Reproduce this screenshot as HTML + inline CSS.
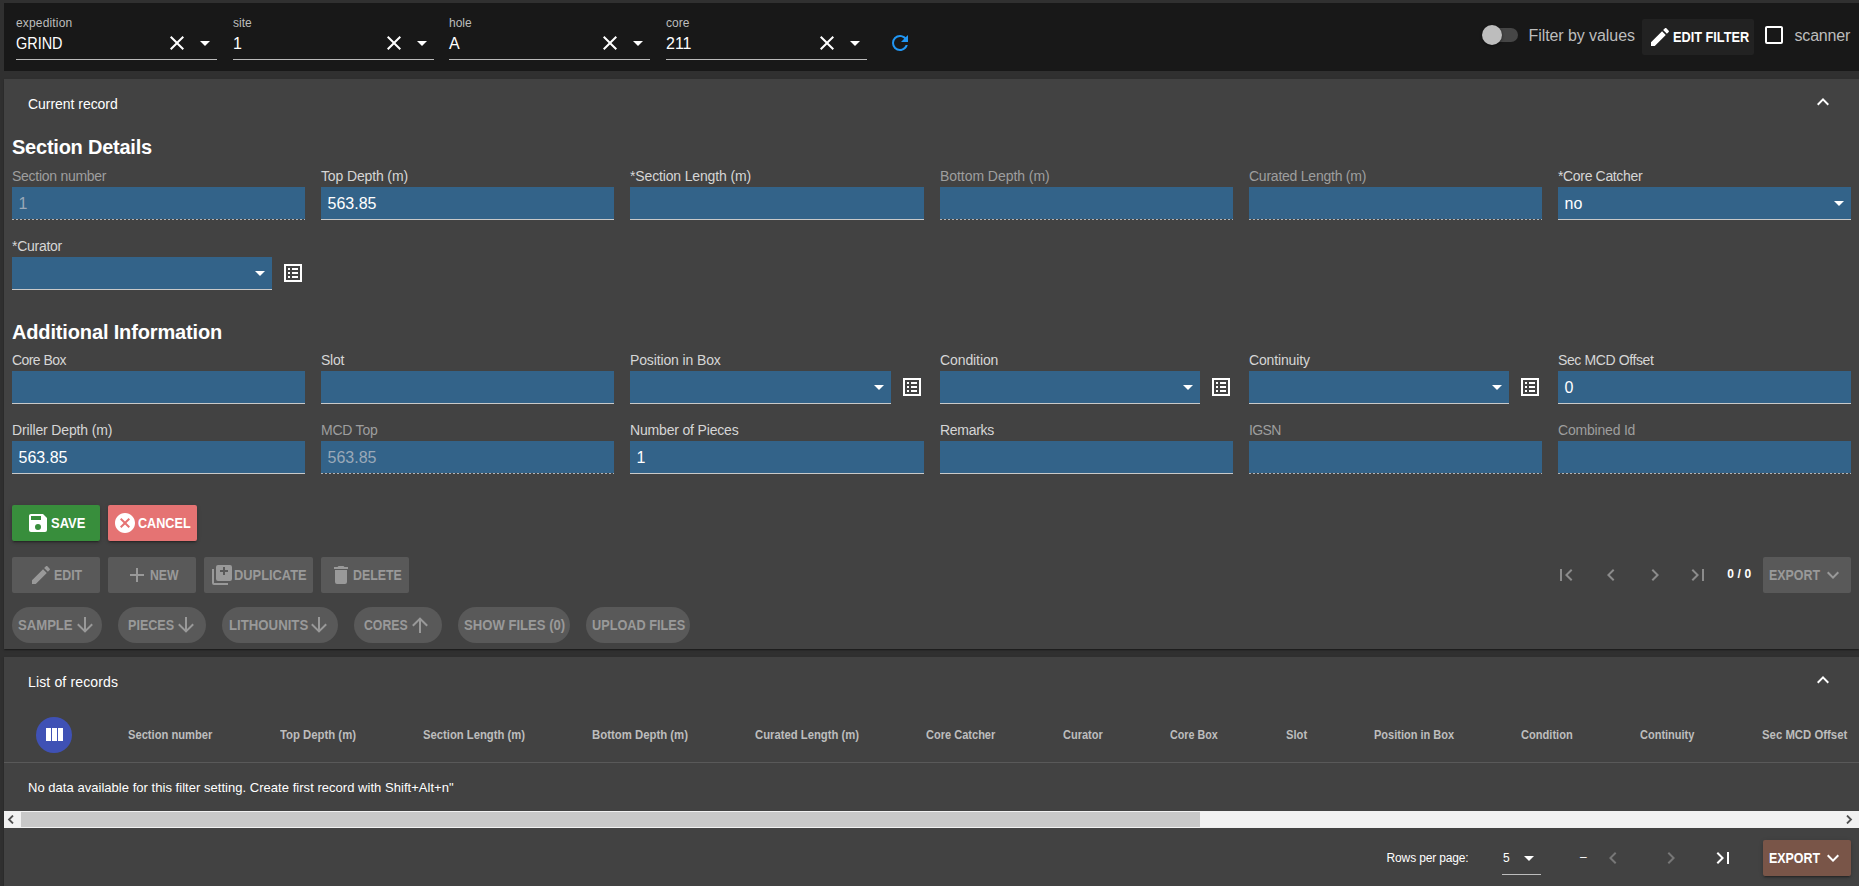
<!DOCTYPE html>
<html><head><meta charset="utf-8"><style>
html,body{margin:0;padding:0;width:1859px;height:886px;overflow:hidden;background:#303030;font-family:"Liberation Sans", sans-serif;}
body{position:relative;}
</style></head><body>
<div style="position:absolute;left:4px;top:3px;width:1855px;height:68px;background:#181818;"></div>
<div style="position:absolute;left:16px;top:16.84px;font-size:12px;line-height:12px;font-weight:400;color:#bdbdbd;white-space:nowrap;letter-spacing:0.163px;">expedition</div>
<div style="position:absolute;left:16px;top:36.46px;font-size:16px;line-height:16px;font-weight:400;color:#fff;white-space:nowrap;transform:scaleX(0.9020);transform-origin:0 0;">GRIND</div>
<div style="position:absolute;left:16px;top:59px;width:201px;height:1px;background:#bababa;"></div>
<svg style="position:absolute;left:164.5px;top:31.3px;" width="24" height="24" viewBox="0 0 24 24"><path fill="#fff" fill-rule="nonzero" d="M19,6.41L17.59,5L12,10.59L6.41,5L5,6.41L10.59,12L5,17.59L6.41,19L12,13.41L17.59,19L19,17.59L13.41,12L19,6.41Z"/></svg>
<svg style="position:absolute;left:192.5px;top:31.3px;" width="24" height="24" viewBox="0 0 24 24"><path fill="#fff" fill-rule="nonzero" d="M7,10L12,15L17,10H7Z"/></svg>
<div style="position:absolute;left:233px;top:16.84px;font-size:12px;line-height:12px;font-weight:400;color:#bdbdbd;white-space:nowrap;letter-spacing:0.000px;">site</div>
<div style="position:absolute;left:233px;top:36.46px;font-size:16px;line-height:16px;font-weight:400;color:#fff;white-space:nowrap;transform:scaleX(1.0000);transform-origin:0 0;">1</div>
<div style="position:absolute;left:233px;top:59px;width:201px;height:1px;background:#bababa;"></div>
<svg style="position:absolute;left:381.5px;top:31.3px;" width="24" height="24" viewBox="0 0 24 24"><path fill="#fff" fill-rule="nonzero" d="M19,6.41L17.59,5L12,10.59L6.41,5L5,6.41L10.59,12L5,17.59L6.41,19L12,13.41L17.59,19L19,17.59L13.41,12L19,6.41Z"/></svg>
<svg style="position:absolute;left:409.5px;top:31.3px;" width="24" height="24" viewBox="0 0 24 24"><path fill="#fff" fill-rule="nonzero" d="M7,10L12,15L17,10H7Z"/></svg>
<div style="position:absolute;left:449px;top:16.84px;font-size:12px;line-height:12px;font-weight:400;color:#bdbdbd;white-space:nowrap;letter-spacing:0.000px;">hole</div>
<div style="position:absolute;left:449px;top:36.46px;font-size:16px;line-height:16px;font-weight:400;color:#fff;white-space:nowrap;transform:scaleX(1.0000);transform-origin:0 0;">A</div>
<div style="position:absolute;left:449px;top:59px;width:201px;height:1px;background:#bababa;"></div>
<svg style="position:absolute;left:597.5px;top:31.3px;" width="24" height="24" viewBox="0 0 24 24"><path fill="#fff" fill-rule="nonzero" d="M19,6.41L17.59,5L12,10.59L6.41,5L5,6.41L10.59,12L5,17.59L6.41,19L12,13.41L17.59,19L19,17.59L13.41,12L19,6.41Z"/></svg>
<svg style="position:absolute;left:625.5px;top:31.3px;" width="24" height="24" viewBox="0 0 24 24"><path fill="#fff" fill-rule="nonzero" d="M7,10L12,15L17,10H7Z"/></svg>
<div style="position:absolute;left:666px;top:16.84px;font-size:12px;line-height:12px;font-weight:400;color:#bdbdbd;white-space:nowrap;letter-spacing:0.000px;">core</div>
<div style="position:absolute;left:666px;top:36.46px;font-size:16px;line-height:16px;font-weight:400;color:#fff;white-space:nowrap;transform:scaleX(1.0000);transform-origin:0 0;">211</div>
<div style="position:absolute;left:666px;top:59px;width:201px;height:1px;background:#bababa;"></div>
<svg style="position:absolute;left:814.5px;top:31.3px;" width="24" height="24" viewBox="0 0 24 24"><path fill="#fff" fill-rule="nonzero" d="M19,6.41L17.59,5L12,10.59L6.41,5L5,6.41L10.59,12L5,17.59L6.41,19L12,13.41L17.59,19L19,17.59L13.41,12L19,6.41Z"/></svg>
<svg style="position:absolute;left:842.5px;top:31.3px;" width="24" height="24" viewBox="0 0 24 24"><path fill="#fff" fill-rule="nonzero" d="M7,10L12,15L17,10H7Z"/></svg>
<svg style="position:absolute;left:888.3px;top:31px;" width="24" height="24" viewBox="0 0 24 24"><path fill="#2196f3" fill-rule="nonzero" d="M17.65,6.35C16.2,4.9 14.21,4 12,4A8,8 0 0,0 4,12A8,8 0 0,0 12,20C15.73,20 18.84,17.45 19.73,14H17.65C16.83,16.33 14.61,18 12,18A6,6 0 0,1 6,12A6,6 0 0,1 12,6C13.66,6 15.14,6.69 16.22,7.78L13,11H20V4L17.65,6.35Z"/></svg>
<div style="position:absolute;left:1486px;top:28px;width:32px;height:14px;background:#464646;border-radius:7px;"></div>
<div style="position:absolute;left:1482px;top:25px;width:20px;height:20px;background:#bdbdbd;border-radius:50%;box-shadow:0 1px 3px rgba(0,0,0,0.5);"></div>
<div style="position:absolute;left:1528.5px;top:27.96px;font-size:16px;line-height:16px;font-weight:400;color:#bdbdbd;white-space:nowrap;letter-spacing:-0.073px;">Filter by values</div>
<div style="position:absolute;left:1642px;top:19px;width:112px;height:36px;background:#222222;border-radius:2px;"></div>
<svg style="position:absolute;left:1647.6px;top:24.7px;" width="24" height="24" viewBox="0 0 24 24"><path fill="#fff" fill-rule="nonzero" d="M20.71,7.04C21.1,6.65 21.1,6 20.71,5.63L18.37,3.29C18,2.9 17.35,2.9 16.96,3.29L15.12,5.12L18.87,8.87M3,17.25V21H6.75L17.81,9.93L14.06,6.18L3,17.25Z"/></svg>
<div style="position:absolute;left:1672.5px;top:29.95px;font-size:14px;line-height:14px;font-weight:700;color:#fff;white-space:nowrap;transform:scaleX(0.9088);transform-origin:0 0;">EDIT FILTER</div>
<svg style="position:absolute;left:1762px;top:23px;" width="24" height="24" viewBox="0 0 24 24"><path fill="#fff" fill-rule="nonzero" d="M19,3H5C3.89,3 3,3.89 3,5V19A2,2 0 0,0 5,21H19A2,2 0 0,0 21,19V5C21,3.89 20.1,3 19,3M19,5V19H5V5H19Z"/></svg>
<div style="position:absolute;left:1794.5px;top:27.96px;font-size:16px;line-height:16px;font-weight:400;color:#bdbdbd;white-space:nowrap;letter-spacing:-0.182px;">scanner</div>
<div style="position:absolute;left:4px;top:79px;width:1855px;height:570px;background:#424242;box-shadow:0 2px 1px -1px rgba(0,0,0,.2),0 1px 1px 0 rgba(0,0,0,.14),0 1px 3px 0 rgba(0,0,0,.12);"></div>
<div style="position:absolute;left:28px;top:97.15px;font-size:14px;line-height:14px;font-weight:400;color:#fff;white-space:nowrap;letter-spacing:-0.036px;">Current record</div>
<svg style="position:absolute;left:1811px;top:89.5px;" width="24" height="24" viewBox="0 0 24 24"><path fill="#fff" fill-rule="nonzero" d="M7.41,15.41L12,10.83L16.59,15.41L18,14L12,8L6,14L7.41,15.41Z"/></svg>
<div style="position:absolute;left:12px;top:137.07px;font-size:20px;line-height:20px;font-weight:700;color:#fff;white-space:nowrap;letter-spacing:-0.233px;">Section Details</div>
<div style="position:absolute;left:12px;top:321.67px;font-size:20px;line-height:20px;font-weight:700;color:#fff;white-space:nowrap;letter-spacing:-0.147px;">Additional Information</div>
<div style="position:absolute;left:12px;top:169.15px;font-size:14px;line-height:14px;font-weight:400;color:#9e9e9e;white-space:nowrap;letter-spacing:-0.276px;">Section number</div>
<div style="position:absolute;left:12px;top:187px;width:293px;height:32px;background:#336389;"></div>
<div style="position:absolute;left:12.00px;top:219px;width:293.00px;height:1px;background:repeating-linear-gradient(to right,rgba(255,255,255,0.6) 0,rgba(255,255,255,0.6) 2px,transparent 2px,transparent 4px)"></div>
<div style="position:absolute;left:18.5px;top:196.26px;font-size:16px;line-height:16px;font-weight:400;color:#9aa9b8;white-space:nowrap;letter-spacing:0.000px;">1</div>
<div style="position:absolute;left:321px;top:169.15px;font-size:14px;line-height:14px;font-weight:400;color:#d6d6d6;white-space:nowrap;letter-spacing:-0.136px;">Top Depth (m)</div>
<div style="position:absolute;left:321px;top:187px;width:293px;height:32px;background:#336389;"></div>
<div style="position:absolute;left:321px;top:219px;width:293px;height:1px;background:#c9c9c9;"></div>
<div style="position:absolute;left:327.5px;top:196.26px;font-size:16px;line-height:16px;font-weight:400;color:#fff;white-space:nowrap;letter-spacing:0.000px;">563.85</div>
<div style="position:absolute;left:630px;top:169.15px;font-size:14px;line-height:14px;font-weight:400;color:#d6d6d6;white-space:nowrap;letter-spacing:-0.148px;">*Section Length (m)</div>
<div style="position:absolute;left:630px;top:187px;width:294px;height:32px;background:#336389;"></div>
<div style="position:absolute;left:630px;top:219px;width:294px;height:1px;background:#c9c9c9;"></div>
<div style="position:absolute;left:940px;top:169.15px;font-size:14px;line-height:14px;font-weight:400;color:#9e9e9e;white-space:nowrap;letter-spacing:-0.054px;">Bottom Depth (m)</div>
<div style="position:absolute;left:940px;top:187px;width:293px;height:32px;background:#336389;"></div>
<div style="position:absolute;left:940.00px;top:219px;width:293.00px;height:1px;background:repeating-linear-gradient(to right,rgba(255,255,255,0.6) 0,rgba(255,255,255,0.6) 2px,transparent 2px,transparent 4px)"></div>
<div style="position:absolute;left:1249px;top:169.15px;font-size:14px;line-height:14px;font-weight:400;color:#9e9e9e;white-space:nowrap;letter-spacing:-0.237px;">Curated Length (m)</div>
<div style="position:absolute;left:1249px;top:187px;width:293px;height:32px;background:#336389;"></div>
<div style="position:absolute;left:1249.00px;top:219px;width:293.00px;height:1px;background:repeating-linear-gradient(to right,rgba(255,255,255,0.6) 0,rgba(255,255,255,0.6) 2px,transparent 2px,transparent 4px)"></div>
<div style="position:absolute;left:1558px;top:169.15px;font-size:14px;line-height:14px;font-weight:400;color:#d6d6d6;white-space:nowrap;letter-spacing:-0.345px;">*Core Catcher</div>
<div style="position:absolute;left:1558px;top:187px;width:293px;height:32px;background:#336389;"></div>
<div style="position:absolute;left:1558px;top:219px;width:293px;height:1px;background:#c9c9c9;"></div>
<div style="position:absolute;left:1564.5px;top:196.26px;font-size:16px;line-height:16px;font-weight:400;color:#fff;white-space:nowrap;letter-spacing:0.000px;">no</div>
<svg style="position:absolute;left:1826.8px;top:191px;" width="24" height="24" viewBox="0 0 24 24"><path fill="#fff" fill-rule="nonzero" d="M7,10L12,15L17,10H7Z"/></svg>
<div style="position:absolute;left:12px;top:239.15px;font-size:14px;line-height:14px;font-weight:400;color:#d6d6d6;white-space:nowrap;letter-spacing:-0.267px;">*Curator</div>
<div style="position:absolute;left:12px;top:257px;width:260px;height:32px;background:#336389;"></div>
<div style="position:absolute;left:12px;top:289px;width:260px;height:1px;background:#c9c9c9;"></div>
<svg style="position:absolute;left:247.8px;top:261px;" width="24" height="24" viewBox="0 0 24 24"><path fill="#fff" fill-rule="nonzero" d="M7,10L12,15L17,10H7Z"/></svg>
<svg style="position:absolute;left:280.9px;top:261px;" width="24" height="24" viewBox="0 0 24 24"><path fill="#fff" fill-rule="nonzero" d="M19,5V19H5V5H19M21,3H3V21H21V3ZM11,7H17V9H11V7ZM11,11H17V13H11V11ZM11,15H17V17H11V15ZM7,7H9V9H7V7ZM7,11H9V13H7V11ZM7,15H9V17H7V15Z"/></svg>
<div style="position:absolute;left:12px;top:353.15px;font-size:14px;line-height:14px;font-weight:400;color:#d6d6d6;white-space:nowrap;letter-spacing:-0.565px;">Core Box</div>
<div style="position:absolute;left:12px;top:371px;width:293px;height:32px;background:#336389;"></div>
<div style="position:absolute;left:12px;top:403px;width:293px;height:1px;background:#c9c9c9;"></div>
<div style="position:absolute;left:321px;top:353.15px;font-size:14px;line-height:14px;font-weight:400;color:#d6d6d6;white-space:nowrap;letter-spacing:-0.278px;">Slot</div>
<div style="position:absolute;left:321px;top:371px;width:293px;height:32px;background:#336389;"></div>
<div style="position:absolute;left:321px;top:403px;width:293px;height:1px;background:#c9c9c9;"></div>
<div style="position:absolute;left:630px;top:353.15px;font-size:14px;line-height:14px;font-weight:400;color:#d6d6d6;white-space:nowrap;letter-spacing:-0.129px;">Position in Box</div>
<div style="position:absolute;left:630px;top:371px;width:261px;height:32px;background:#336389;"></div>
<div style="position:absolute;left:630px;top:403px;width:261px;height:1px;background:#c9c9c9;"></div>
<svg style="position:absolute;left:866.8px;top:375px;" width="24" height="24" viewBox="0 0 24 24"><path fill="#fff" fill-rule="nonzero" d="M7,10L12,15L17,10H7Z"/></svg>
<svg style="position:absolute;left:899.9px;top:375px;" width="24" height="24" viewBox="0 0 24 24"><path fill="#fff" fill-rule="nonzero" d="M19,5V19H5V5H19M21,3H3V21H21V3ZM11,7H17V9H11V7ZM11,11H17V13H11V11ZM11,15H17V17H11V15ZM7,7H9V9H7V7ZM7,11H9V13H7V11ZM7,15H9V17H7V15Z"/></svg>
<div style="position:absolute;left:940px;top:353.15px;font-size:14px;line-height:14px;font-weight:400;color:#d6d6d6;white-space:nowrap;letter-spacing:-0.096px;">Condition</div>
<div style="position:absolute;left:940px;top:371px;width:260px;height:32px;background:#336389;"></div>
<div style="position:absolute;left:940px;top:403px;width:260px;height:1px;background:#c9c9c9;"></div>
<svg style="position:absolute;left:1175.8px;top:375px;" width="24" height="24" viewBox="0 0 24 24"><path fill="#fff" fill-rule="nonzero" d="M7,10L12,15L17,10H7Z"/></svg>
<svg style="position:absolute;left:1208.9px;top:375px;" width="24" height="24" viewBox="0 0 24 24"><path fill="#fff" fill-rule="nonzero" d="M19,5V19H5V5H19M21,3H3V21H21V3ZM11,7H17V9H11V7ZM11,11H17V13H11V11ZM11,15H17V17H11V15ZM7,7H9V9H7V7ZM7,11H9V13H7V11ZM7,15H9V17H7V15Z"/></svg>
<div style="position:absolute;left:1249px;top:353.15px;font-size:14px;line-height:14px;font-weight:400;color:#d6d6d6;white-space:nowrap;letter-spacing:-0.151px;">Continuity</div>
<div style="position:absolute;left:1249px;top:371px;width:260px;height:32px;background:#336389;"></div>
<div style="position:absolute;left:1249px;top:403px;width:260px;height:1px;background:#c9c9c9;"></div>
<svg style="position:absolute;left:1484.8px;top:375px;" width="24" height="24" viewBox="0 0 24 24"><path fill="#fff" fill-rule="nonzero" d="M7,10L12,15L17,10H7Z"/></svg>
<svg style="position:absolute;left:1517.9px;top:375px;" width="24" height="24" viewBox="0 0 24 24"><path fill="#fff" fill-rule="nonzero" d="M19,5V19H5V5H19M21,3H3V21H21V3ZM11,7H17V9H11V7ZM11,11H17V13H11V11ZM11,15H17V17H11V15ZM7,7H9V9H7V7ZM7,11H9V13H7V11ZM7,15H9V17H7V15Z"/></svg>
<div style="position:absolute;left:1558px;top:353.15px;font-size:14px;line-height:14px;font-weight:400;color:#d6d6d6;white-space:nowrap;letter-spacing:-0.384px;">Sec MCD Offset</div>
<div style="position:absolute;left:1558px;top:371px;width:293px;height:32px;background:#336389;"></div>
<div style="position:absolute;left:1558px;top:403px;width:293px;height:1px;background:#c9c9c9;"></div>
<div style="position:absolute;left:1564.5px;top:380.26px;font-size:16px;line-height:16px;font-weight:400;color:#fff;white-space:nowrap;letter-spacing:0.000px;">0</div>
<div style="position:absolute;left:12px;top:423.15px;font-size:14px;line-height:14px;font-weight:400;color:#d6d6d6;white-space:nowrap;letter-spacing:-0.138px;">Driller Depth (m)</div>
<div style="position:absolute;left:12px;top:441px;width:293px;height:32px;background:#336389;"></div>
<div style="position:absolute;left:12px;top:473px;width:293px;height:1px;background:#c9c9c9;"></div>
<div style="position:absolute;left:18.5px;top:450.26px;font-size:16px;line-height:16px;font-weight:400;color:#fff;white-space:nowrap;letter-spacing:0.000px;">563.85</div>
<div style="position:absolute;left:321px;top:423.15px;font-size:14px;line-height:14px;font-weight:400;color:#9e9e9e;white-space:nowrap;letter-spacing:-0.226px;">MCD Top</div>
<div style="position:absolute;left:321px;top:441px;width:293px;height:32px;background:#336389;"></div>
<div style="position:absolute;left:321.00px;top:473px;width:293.00px;height:1px;background:repeating-linear-gradient(to right,rgba(255,255,255,0.6) 0,rgba(255,255,255,0.6) 2px,transparent 2px,transparent 4px)"></div>
<div style="position:absolute;left:327.5px;top:450.26px;font-size:16px;line-height:16px;font-weight:400;color:#9aa9b8;white-space:nowrap;letter-spacing:0.000px;">563.85</div>
<div style="position:absolute;left:630px;top:423.15px;font-size:14px;line-height:14px;font-weight:400;color:#d6d6d6;white-space:nowrap;letter-spacing:-0.171px;">Number of Pieces</div>
<div style="position:absolute;left:630px;top:441px;width:294px;height:32px;background:#336389;"></div>
<div style="position:absolute;left:630px;top:473px;width:294px;height:1px;background:#c9c9c9;"></div>
<div style="position:absolute;left:636.5px;top:450.26px;font-size:16px;line-height:16px;font-weight:400;color:#fff;white-space:nowrap;letter-spacing:0.000px;">1</div>
<div style="position:absolute;left:940px;top:423.15px;font-size:14px;line-height:14px;font-weight:400;color:#d6d6d6;white-space:nowrap;letter-spacing:-0.301px;">Remarks</div>
<div style="position:absolute;left:940px;top:441px;width:293px;height:32px;background:#336389;"></div>
<div style="position:absolute;left:940px;top:473px;width:293px;height:1px;background:#c9c9c9;"></div>
<div style="position:absolute;left:1249px;top:423.15px;font-size:14px;line-height:14px;font-weight:400;color:#9e9e9e;white-space:nowrap;letter-spacing:-0.606px;">IGSN</div>
<div style="position:absolute;left:1249px;top:441px;width:293px;height:32px;background:#336389;"></div>
<div style="position:absolute;left:1249.00px;top:473px;width:293.00px;height:1px;background:repeating-linear-gradient(to right,rgba(255,255,255,0.6) 0,rgba(255,255,255,0.6) 2px,transparent 2px,transparent 4px)"></div>
<div style="position:absolute;left:1558px;top:423.15px;font-size:14px;line-height:14px;font-weight:400;color:#9e9e9e;white-space:nowrap;letter-spacing:-0.199px;">Combined Id</div>
<div style="position:absolute;left:1558px;top:441px;width:293px;height:32px;background:#336389;"></div>
<div style="position:absolute;left:1558.00px;top:473px;width:293.00px;height:1px;background:repeating-linear-gradient(to right,rgba(255,255,255,0.6) 0,rgba(255,255,255,0.6) 2px,transparent 2px,transparent 4px)"></div>
<div style="position:absolute;left:12px;top:505px;width:88px;height:36px;background:#388e3c;box-shadow:0 3px 1px -2px rgba(0,0,0,.2),0 2px 2px 0 rgba(0,0,0,.14),0 1px 5px 0 rgba(0,0,0,.12);border-radius:2px;"></div>
<svg style="position:absolute;left:26.4px;top:510.8px;" width="24" height="24" viewBox="0 0 24 24"><path fill="#fff" fill-rule="nonzero" d="M15,9H5V5H15M12,19A3,3 0 0,1 9,16A3,3 0 0,1 12,13A3,3 0 0,1 15,16A3,3 0 0,1 12,19M17,3H5C3.89,3 3,3.9 3,5V19A2,2 0 0,0 5,21H19A2,2 0 0,0 21,19V7L17,3Z"/></svg>
<div style="position:absolute;left:51.4px;top:515.95px;font-size:14px;line-height:14px;font-weight:700;color:#fff;white-space:nowrap;transform:scaleX(0.9252);transform-origin:0 0;">SAVE</div>
<div style="position:absolute;left:108px;top:505px;width:89px;height:36px;background:#e57373;box-shadow:0 3px 1px -2px rgba(0,0,0,.2),0 2px 2px 0 rgba(0,0,0,.14),0 1px 5px 0 rgba(0,0,0,.12);border-radius:2px;"></div>
<svg style="position:absolute;left:113.4px;top:511.3px;" width="24" height="24" viewBox="0 0 24 24"><path fill="#fff" fill-rule="nonzero" d="M12,2C17.53,2 22,6.47 22,12C22,17.53 17.53,22 12,22C6.47,22 2,17.53 2,12C2,6.47 6.47,2 12,2M15.59,7L12,10.59L8.41,7L7,8.41L10.59,12L7,15.59L8.41,17L12,13.41L15.59,17L17,15.59L13.41,12L17,8.41L15.59,7Z"/></svg>
<div style="position:absolute;left:138.3px;top:515.95px;font-size:14px;line-height:14px;font-weight:700;color:#fff;white-space:nowrap;transform:scaleX(0.9017);transform-origin:0 0;">CANCEL</div>
<div style="position:absolute;left:12px;top:557px;width:88px;height:36px;background:#595959;border-radius:2px;"></div>
<svg style="position:absolute;left:28.9px;top:562.8px;" width="24" height="24" viewBox="0 0 24 24"><path fill="#999999" fill-rule="evenodd" d="M20.71,7.04C21.1,6.65 21.1,6 20.71,5.63L18.37,3.29C18,2.9 17.35,2.9 16.96,3.29L15.12,5.12L18.87,8.87M3,17.25V21H6.75L17.81,9.93L14.06,6.18L3,17.25Z"/></svg>
<div style="position:absolute;left:53.8px;top:568.15px;font-size:14px;line-height:14px;font-weight:700;color:#999999;white-space:nowrap;transform:scaleX(0.8813);transform-origin:0 0;">EDIT</div>
<div style="position:absolute;left:108px;top:557px;width:88px;height:36px;background:#595959;border-radius:2px;"></div>
<svg style="position:absolute;left:125px;top:563.2px;" width="24" height="24" viewBox="0 0 24 24"><path fill="#999999" fill-rule="evenodd" d="M19,13H13V19H11V13H5V11H11V5H13V11H19V13Z"/></svg>
<div style="position:absolute;left:149.6px;top:568.15px;font-size:14px;line-height:14px;font-weight:700;color:#999999;white-space:nowrap;transform:scaleX(0.8730);transform-origin:0 0;">NEW</div>
<div style="position:absolute;left:204px;top:557px;width:109px;height:36px;background:#595959;border-radius:2px;"></div>
<svg style="position:absolute;left:209.9px;top:563.1px;" width="24" height="24" viewBox="0 0 24 24"><path fill="#999999" fill-rule="evenodd" d="M4,6H2V20A2,2 0 0,0 4,22H18V20H4M18,7H15V4H13V7H10V9H13V12H15V9H18M20,2H8A2,2 0 0,0 6,4V16A2,2 0 0,0 8,18H20A2,2 0 0,0 22,16V4A2,2 0 0,0 20,2Z"/></svg>
<div style="position:absolute;left:234.2px;top:568.15px;font-size:14px;line-height:14px;font-weight:700;color:#999999;white-space:nowrap;transform:scaleX(0.9183);transform-origin:0 0;">DUPLICATE</div>
<div style="position:absolute;left:321px;top:557px;width:88px;height:36px;background:#595959;border-radius:2px;"></div>
<svg style="position:absolute;left:328.7px;top:563px;" width="24" height="24" viewBox="0 0 24 24"><path fill="#999999" fill-rule="evenodd" d="M19,4H15.5L14.5,3H9.5L8.5,4H5V6H19M6,19A2,2 0 0,0 8,21H16A2,2 0 0,0 18,19V7H6V19Z"/></svg>
<div style="position:absolute;left:352.7px;top:568.15px;font-size:14px;line-height:14px;font-weight:700;color:#999999;white-space:nowrap;transform:scaleX(0.8836);transform-origin:0 0;">DELETE</div>
<div style="position:absolute;left:12px;top:607px;width:90px;height:36px;background:#595959;border-radius:18px;"></div>
<div style="position:absolute;left:18px;top:618.15px;font-size:14px;line-height:14px;font-weight:700;color:#999999;white-space:nowrap;transform:scaleX(0.9362);transform-origin:0 0;">SAMPLE</div>
<svg style="position:absolute;left:72.62px;top:613.2px;" width="24" height="24" viewBox="0 0 24 24"><path fill="#999999" fill-rule="nonzero" d="M11,4H13V16L18.5,10.5L19.92,11.92L12,19.84L4.08,11.92L5.5,10.5L11,16V4Z"/></svg>
<div style="position:absolute;left:118px;top:607px;width:88px;height:36px;background:#595959;border-radius:18px;"></div>
<div style="position:absolute;left:127.5px;top:618.15px;font-size:14px;line-height:14px;font-weight:700;color:#999999;white-space:nowrap;transform:scaleX(0.8978);transform-origin:0 0;">PIECES</div>
<svg style="position:absolute;left:173.62px;top:613.2px;" width="24" height="24" viewBox="0 0 24 24"><path fill="#999999" fill-rule="nonzero" d="M11,4H13V16L18.5,10.5L19.92,11.92L12,19.84L4.08,11.92L5.5,10.5L11,16V4Z"/></svg>
<div style="position:absolute;left:222px;top:607px;width:116px;height:36px;background:#595959;border-radius:18px;"></div>
<div style="position:absolute;left:228.5px;top:618.15px;font-size:14px;line-height:14px;font-weight:700;color:#999999;white-space:nowrap;transform:scaleX(0.9432);transform-origin:0 0;">LITHOUNITS</div>
<svg style="position:absolute;left:307.32px;top:613.2px;" width="24" height="24" viewBox="0 0 24 24"><path fill="#999999" fill-rule="nonzero" d="M11,4H13V16L18.5,10.5L19.92,11.92L12,19.84L4.08,11.92L5.5,10.5L11,16V4Z"/></svg>
<div style="position:absolute;left:354px;top:607px;width:88px;height:36px;background:#595959;border-radius:18px;"></div>
<div style="position:absolute;left:363.9px;top:618.15px;font-size:14px;line-height:14px;font-weight:700;color:#999999;white-space:nowrap;transform:scaleX(0.8757);transform-origin:0 0;">CORES</div>
<svg style="position:absolute;left:407.52px;top:613.2px;" width="24" height="24" viewBox="0 0 24 24"><path fill="#999999" fill-rule="nonzero" d="M13,20H11V8L5.5,13.5L4.08,12.08L12,4.16L19.92,12.08L18.5,13.5L13,8V20Z"/></svg>
<div style="position:absolute;left:458px;top:607px;width:112px;height:36px;background:#595959;border-radius:18px;"></div>
<div style="position:absolute;left:463.6px;top:618.15px;font-size:14px;line-height:14px;font-weight:700;color:#999999;white-space:nowrap;transform:scaleX(0.9363);transform-origin:0 0;">SHOW FILES (0)</div>
<div style="position:absolute;left:586px;top:607px;width:104px;height:36px;background:#595959;border-radius:18px;"></div>
<div style="position:absolute;left:592.3px;top:618.15px;font-size:14px;line-height:14px;font-weight:700;color:#999999;white-space:nowrap;transform:scaleX(0.9088);transform-origin:0 0;">UPLOAD FILES</div>
<svg style="position:absolute;left:1554.3px;top:563px;" width="24" height="24" viewBox="0 0 24 24"><path fill="#8b8b8b" fill-rule="nonzero" d="M18.41,16.59L13.82,12L18.41,7.41L17,6L11,12L17,18L18.41,16.59M6,6H8V18H6V6Z"/></svg>
<svg style="position:absolute;left:1598.6px;top:563px;" width="24" height="24" viewBox="0 0 24 24"><path fill="#8b8b8b" fill-rule="nonzero" d="M15.41,16.58L10.83,12L15.41,7.41L14,6L8,12L14,18L15.41,16.58Z"/></svg>
<svg style="position:absolute;left:1643px;top:563px;" width="24" height="24" viewBox="0 0 24 24"><path fill="#8b8b8b" fill-rule="nonzero" d="M8.59,16.58L13.17,12L8.59,7.41L10,6L16,12L10,18L8.59,16.58Z"/></svg>
<svg style="position:absolute;left:1686.4px;top:563px;" width="24" height="24" viewBox="0 0 24 24"><path fill="#8b8b8b" fill-rule="nonzero" d="M5.59,7.41L10.18,12L5.59,16.59L7,18L13,12L7,6L5.59,7.41M16,6H18V18H16V6Z"/></svg>
<div style="position:absolute;left:1727.3px;top:567.84px;font-size:12px;line-height:12px;font-weight:700;color:#fff;white-space:nowrap;letter-spacing:0.156px;">0 / 0</div>
<div style="position:absolute;left:1763px;top:557px;width:88px;height:36px;background:#595959;border-radius:2px;"></div>
<div style="position:absolute;left:1769px;top:568.15px;font-size:14px;line-height:14px;font-weight:700;color:#999999;white-space:nowrap;transform:scaleX(0.8877);transform-origin:0 0;">EXPORT</div>
<svg style="position:absolute;left:1821px;top:563px;" width="24" height="24" viewBox="0 0 24 24"><path fill="#999999" fill-rule="nonzero" d="M7.41,8.58L12,13.17L16.59,8.58L18,10L12,16L6,10L7.41,8.58Z"/></svg>
<div style="position:absolute;left:4px;top:657px;width:1855px;height:229px;background:#424242;box-shadow:0 2px 1px -1px rgba(0,0,0,.2),0 1px 1px 0 rgba(0,0,0,.14),0 1px 3px 0 rgba(0,0,0,.12);"></div>
<div style="position:absolute;left:28px;top:675.15px;font-size:14px;line-height:14px;font-weight:400;color:#fff;white-space:nowrap;letter-spacing:0.148px;">List of records</div>
<svg style="position:absolute;left:1811px;top:667.5px;" width="24" height="24" viewBox="0 0 24 24"><path fill="#fff" fill-rule="nonzero" d="M7.41,15.41L12,10.83L16.59,15.41L18,14L12,8L6,14L7.41,15.41Z"/></svg>
<div style="position:absolute;left:36px;top:717px;width:36px;height:36px;background:#3f51b5;border-radius:50%;"></div>
<svg style="position:absolute;left:42px;top:723px;" width="24" height="24" viewBox="0 0 24 24"><path fill="#fff" fill-rule="nonzero" d="M16,5V18H21V5M4,18H9V5H4M10,18H15V5H10V18Z"/></svg>
<div style="position:absolute;left:128px;top:728.84px;font-size:12px;line-height:12px;font-weight:700;color:#bdbdbd;white-space:nowrap;transform:scaleX(0.9307);transform-origin:0 0;">Section number</div>
<div style="position:absolute;left:280px;top:728.84px;font-size:12px;line-height:12px;font-weight:700;color:#bdbdbd;white-space:nowrap;transform:scaleX(0.9449);transform-origin:0 0;">Top Depth (m)</div>
<div style="position:absolute;left:423px;top:728.84px;font-size:12px;line-height:12px;font-weight:700;color:#bdbdbd;white-space:nowrap;transform:scaleX(0.9387);transform-origin:0 0;">Section Length (m)</div>
<div style="position:absolute;left:592px;top:728.84px;font-size:12px;line-height:12px;font-weight:700;color:#bdbdbd;white-space:nowrap;transform:scaleX(0.9475);transform-origin:0 0;">Bottom Depth (m)</div>
<div style="position:absolute;left:755px;top:728.84px;font-size:12px;line-height:12px;font-weight:700;color:#bdbdbd;white-space:nowrap;transform:scaleX(0.9398);transform-origin:0 0;">Curated Length (m)</div>
<div style="position:absolute;left:926px;top:728.84px;font-size:12px;line-height:12px;font-weight:700;color:#bdbdbd;white-space:nowrap;transform:scaleX(0.9196);transform-origin:0 0;">Core Catcher</div>
<div style="position:absolute;left:1063px;top:728.84px;font-size:12px;line-height:12px;font-weight:700;color:#bdbdbd;white-space:nowrap;transform:scaleX(0.9160);transform-origin:0 0;">Curator</div>
<div style="position:absolute;left:1170px;top:728.84px;font-size:12px;line-height:12px;font-weight:700;color:#bdbdbd;white-space:nowrap;transform:scaleX(0.8944);transform-origin:0 0;">Core Box</div>
<div style="position:absolute;left:1285.8px;top:728.84px;font-size:12px;line-height:12px;font-weight:700;color:#bdbdbd;white-space:nowrap;transform:scaleX(0.9352);transform-origin:0 0;">Slot</div>
<div style="position:absolute;left:1373.6px;top:728.84px;font-size:12px;line-height:12px;font-weight:700;color:#bdbdbd;white-space:nowrap;transform:scaleX(0.9172);transform-origin:0 0;">Position in Box</div>
<div style="position:absolute;left:1521px;top:728.84px;font-size:12px;line-height:12px;font-weight:700;color:#bdbdbd;white-space:nowrap;transform:scaleX(0.9236);transform-origin:0 0;">Condition</div>
<div style="position:absolute;left:1639.8px;top:728.84px;font-size:12px;line-height:12px;font-weight:700;color:#bdbdbd;white-space:nowrap;transform:scaleX(0.9171);transform-origin:0 0;">Continuity</div>
<div style="position:absolute;left:1761.5px;top:728.84px;font-size:12px;line-height:12px;font-weight:700;color:#bdbdbd;white-space:nowrap;transform:scaleX(0.9476);transform-origin:0 0;">Sec MCD Offset</div>
<div style="position:absolute;left:4px;top:762px;width:1855px;height:1px;background:rgba(255,255,255,0.12);"></div>
<div style="position:absolute;left:28px;top:781.00px;font-size:13px;line-height:13px;font-weight:400;color:#fff;white-space:nowrap;letter-spacing:0.033px;">No data available for this filter setting. Create first record with Shift+Alt+n"</div>
<div style="position:absolute;left:4px;top:811px;width:1855px;height:17px;background:#f1f1f1;"></div>
<div style="position:absolute;left:21px;top:812px;width:1179px;height:15px;background:#c8c8c8;"></div>
<svg style="position:absolute;left:7px;top:815px" width="8" height="9" viewBox="0 0 8 9"><path d="M6,0.5 L2,4.5 L6,8.5" stroke="#505050" stroke-width="1.8" fill="none"/></svg>
<svg style="position:absolute;left:1845px;top:815px" width="8" height="9" viewBox="0 0 8 9"><path d="M2,0.5 L6,4.5 L2,8.5" stroke="#505050" stroke-width="1.8" fill="none"/></svg>
<div style="position:absolute;left:1386.6px;top:852.34px;font-size:12px;line-height:12px;font-weight:400;color:#fff;white-space:nowrap;letter-spacing:-0.155px;">Rows per page:</div>
<div style="position:absolute;left:1503px;top:852.34px;font-size:12px;line-height:12px;font-weight:400;color:#fff;white-space:nowrap;letter-spacing:0.000px;">5</div>
<svg style="position:absolute;left:1516.7px;top:845.5px;" width="24" height="24" viewBox="0 0 24 24"><path fill="#fff" fill-rule="nonzero" d="M7,10L12,15L17,10H7Z"/></svg>
<div style="position:absolute;left:1502px;top:874px;width:39px;height:1px;background:#bdbdbd;"></div>
<div style="position:absolute;left:1580px;top:851.14px;font-size:12px;line-height:12px;font-weight:400;color:#fff;white-space:nowrap;letter-spacing:0.000px;">–</div>
<svg style="position:absolute;left:1601px;top:846px;" width="24" height="24" viewBox="0 0 24 24"><path fill="#777" fill-rule="nonzero" d="M15.41,16.58L10.83,12L15.41,7.41L14,6L8,12L14,18L15.41,16.58Z"/></svg>
<svg style="position:absolute;left:1658.6px;top:846px;" width="24" height="24" viewBox="0 0 24 24"><path fill="#777" fill-rule="nonzero" d="M8.59,16.58L13.17,12L8.59,7.41L10,6L16,12L10,18L8.59,16.58Z"/></svg>
<svg style="position:absolute;left:1711px;top:846px;" width="24" height="24" viewBox="0 0 24 24"><path fill="#fff" fill-rule="nonzero" d="M5.59,7.41L10.18,12L5.59,16.59L7,18L13,12L7,6L5.59,7.41M16,6H18V18H16V6Z"/></svg>
<div style="position:absolute;left:1763px;top:840px;width:88px;height:36px;background:#795548;box-shadow:0 3px 1px -2px rgba(0,0,0,.2),0 2px 2px 0 rgba(0,0,0,.14),0 1px 5px 0 rgba(0,0,0,.12);border-radius:2px;"></div>
<div style="position:absolute;left:1768.8px;top:851.15px;font-size:14px;line-height:14px;font-weight:700;color:#fff;white-space:nowrap;transform:scaleX(0.8877);transform-origin:0 0;">EXPORT</div>
<svg style="position:absolute;left:1821px;top:846px;" width="24" height="24" viewBox="0 0 24 24"><path fill="#fff" fill-rule="nonzero" d="M7.41,8.58L12,13.17L16.59,8.58L18,10L12,16L6,10L7.41,8.58Z"/></svg>
</body></html>
